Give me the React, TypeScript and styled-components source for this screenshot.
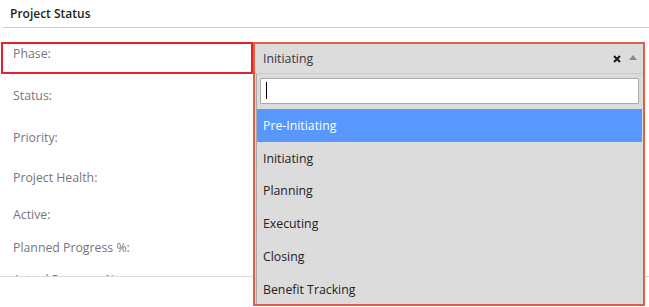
import * as React from 'react';
import styled, { createGlobalStyle } from 'styled-components';

const GlobalStyle = createGlobalStyle`
    html, body {
        margin: 0;
        padding: 0;
        background: #fff;
    }
    body {
        font-family: 'Open Sans', 'Noto Sans', sans-serif;
        font-size: 12.3px;
    }
`;

interface Felt {
    label: string;
    hoyde: number;
    feil?: boolean;
}

const felter: Felt[] = [
    { label: 'Phase:', hoyde: 42, feil: true },
    { label: 'Status:', hoyde: 42 },
    { label: 'Priority:', hoyde: 40 },
    { label: 'Project Health:', hoyde: 37 },
    { label: 'Active:', hoyde: 33 },
    { label: 'Planned Progress %:', hoyde: 32 },
    { label: 'Actual Progress %:', hoyde: 33 }
];

const valg = ['Pre-Initiating', 'Initiating', 'Planning', 'Executing', 'Closing', 'Benefit Tracking'];

const PageStyle = styled.div`
    position: relative;
    width: 649px;
    height: 307px;
    overflow: hidden;
`;

const HeaderStyle = styled.header`
    margin-left: 3px;
    height: 27px;
    line-height: 27px;
    padding-left: 7px;
    border-bottom: 1px solid #cfcfcf;
    font-weight: 600;
    font-size: 12px;
    color: #1e1e1e;
`;

const BodyStyle = styled.div`
    height: 234px;
    padding-top: 14px;
    overflow: hidden;
    border-bottom: 1px solid #dcdcdc;
`;

const RadStyle = styled.div<{ $hoyde: number }>`
    display: flex;
    height: ${p => p.$hoyde}px;
    padding-left: 1px;
`;

const LabelStyle = styled.div<{ $feil?: boolean }>`
    box-sizing: border-box;
    width: 252px;
    height: 32px;
    padding: 1px 0 0 10px;
    line-height: 18px;
    border: 2px solid ${p => (p.$feil ? '#e8202c' : 'transparent')};
    color: #77757c;
`;

const FeltStyle = styled.div`
    flex: 1;
`;

const SelectStyle = styled.div`
    position: absolute;
    z-index: 10;
    box-sizing: border-box;
    width: 392px;
    height: 264px;
    overflow: hidden;
    border: 2px solid #db6340;
    background: #dcdcdc;
`;

const SelectHodeStyle = styled.div`
    display: flex;
    align-items: center;
    height: 29px;
    padding: 0 6px 0 8px;
    border-bottom: 1px solid #c9c9c9;
    color: #3a3340;
`;

const ValgtTekst = styled.span`
    flex: 1;
`;

const FjernIkon = styled.svg`
    width: 8px;
    height: 8px;
    margin-right: 8px;
    margin-top: 1px;
`;

const PilOpp = styled.span`
    width: 0;
    height: 0;
    border-left: 4px solid transparent;
    border-right: 4px solid transparent;
    border-bottom: 5px solid #8a8a8a;
    margin-top: -2px;
`;

const NedtrekkStyle = styled.div`
    margin-left: 1px;
    border-left: 1px solid #a9a9a9;
    height: 230px;
`;

const SokStyle = styled.div`
    padding: 4px 4px 5px 3px;
`;

const SokeFelt = styled.div`
    box-sizing: border-box;
    height: 26px;
    background: #fff;
    border: 1px solid #aaa;
    border-radius: 1px;
    padding: 3px 0 0 5px;
`;

const Markor = styled.span`
    display: block;
    width: 1px;
    height: 17px;
    background: #000;
`;

const ValgListeStyle = styled.ol`
    list-style: none;
    margin: 0 1px 0 0;
    padding: 0;
`;

const ValgStyle = styled.li<{ $aktiv?: boolean }>`
    display: flex;
    align-items: center;
    height: 32.8px;
    padding-left: 6px;
    background: ${p => (p.$aktiv ? '#5897fb' : 'transparent')};
    color: ${p => (p.$aktiv ? '#fff' : '#222')};
`;

function PhaseSelect() {
    return (
        <SelectStyle>
            <SelectHodeStyle>
                <ValgtTekst>Initiating</ValgtTekst>
                <FjernIkon viewBox="0 0 8 8">
                    <path d="M1 1 L7 7 M7 1 L1 7" stroke="#1a1a2a" strokeWidth="2" />
                </FjernIkon>
                <PilOpp />
            </SelectHodeStyle>
            <NedtrekkStyle>
                <SokStyle>
                    <SokeFelt>
                        <Markor />
                    </SokeFelt>
                </SokStyle>
                <ValgListeStyle>
                    {valg.map((v, i) => (
                        <ValgStyle key={v} $aktiv={i === 0}>
                            {v}
                        </ValgStyle>
                    ))}
                </ValgListeStyle>
            </NedtrekkStyle>
        </SelectStyle>
    );
}

function App() {
    return (
        <PageStyle>
            <GlobalStyle />
            <HeaderStyle>Project Status</HeaderStyle>
            <BodyStyle>
                {felter.map(felt => (
                    <RadStyle key={felt.label} $hoyde={felt.hoyde}>
                        <LabelStyle $feil={felt.feil}>{felt.label}</LabelStyle>
                        <FeltStyle>{felt.feil && <PhaseSelect />}</FeltStyle>
                    </RadStyle>
                ))}
            </BodyStyle>
        </PageStyle>
    );
}

export default App;
